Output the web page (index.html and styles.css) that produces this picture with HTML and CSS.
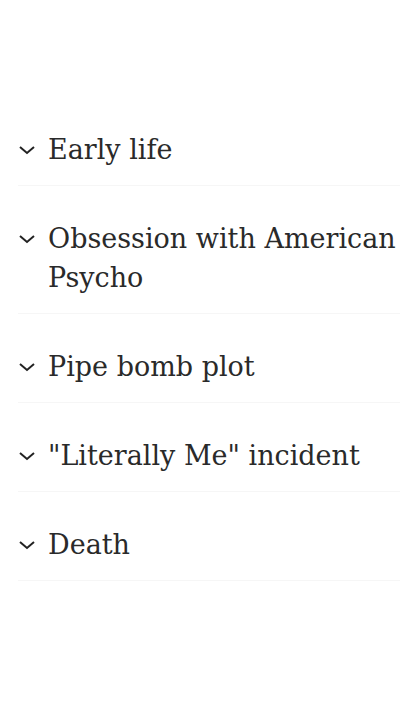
FILE: index.html
```html
<!DOCTYPE html>
<html>

<head>
    <title>Contents</title>
    <link rel="stylesheet" href="styles.css">
</head>

<body>
    <ul class="toc">
        <li class="toc-item">
            <svg class="chevron" viewBox="0 0 18 10"><path d="M2 2 L9 8 L16 2" /></svg>
            <span class="toc-title">Early life</span>
        </li>
        <li class="toc-item">
            <svg class="chevron" viewBox="0 0 18 10"><path d="M2 2 L9 8 L16 2" /></svg>
            <span class="toc-title">Obsession with American Psycho</span>
        </li>
        <li class="toc-item">
            <svg class="chevron" viewBox="0 0 18 10"><path d="M2 2 L9 8 L16 2" /></svg>
            <span class="toc-title">Pipe bomb plot</span>
        </li>
        <li class="toc-item">
            <svg class="chevron" viewBox="0 0 18 10"><path d="M2 2 L9 8 L16 2" /></svg>
            <span class="toc-title">"Literally Me" incident</span>
        </li>
        <li class="toc-item">
            <svg class="chevron" viewBox="0 0 18 10"><path d="M2 2 L9 8 L16 2" /></svg>
            <span class="toc-title">Death</span>
        </li>
    </ul>
</body>

</html>
```

FILE: styles.css
```css
body {
    margin: 0;
    background-color: #fff;
    font-family: "DejaVu Serif", Georgia, serif;
    color: #2a2a2a;
}

.toc {
    list-style: none;
    margin: 0;
    padding: 97px 0 0 18px;
}

.toc-item {
    display: flex;
    align-items: flex-start;
    padding: 33px 0 16px 0;
    border-bottom: 1px solid #f6f6f6;
}

.chevron {
    flex: none;
    width: 18px;
    height: 10px;
    margin: 15px 12px 0 0;
    fill: none;
    stroke: #222;
    stroke-width: 2;
}

.toc-title {
    font-size: 27px;
    line-height: 39px;
}
```
